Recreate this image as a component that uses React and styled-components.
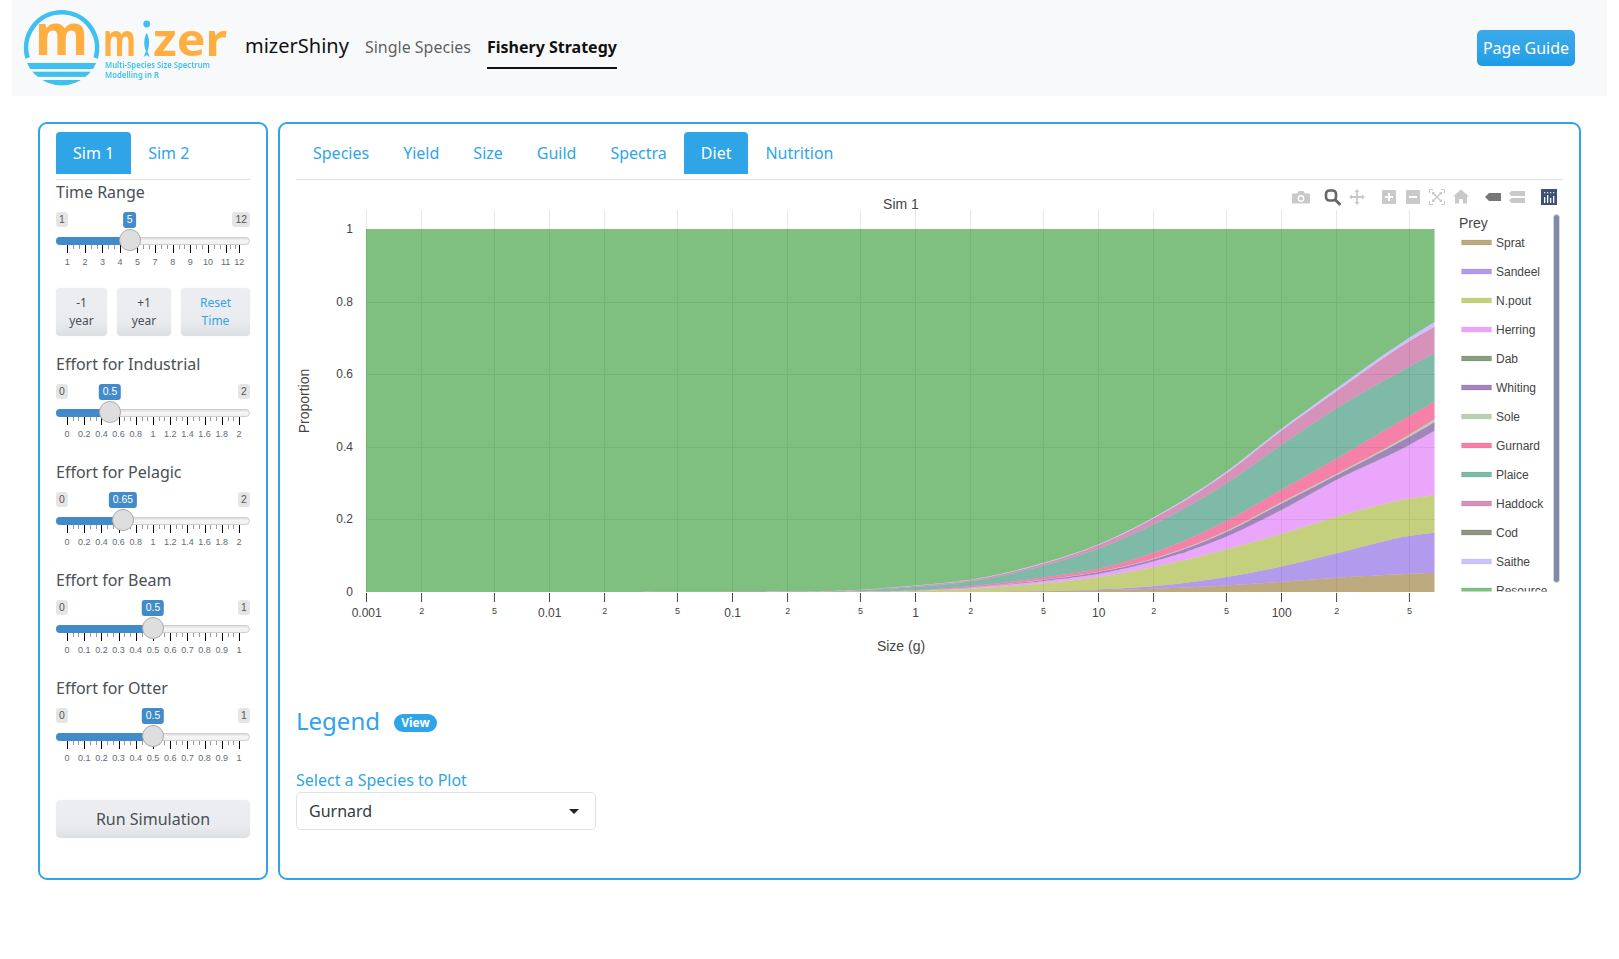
import React from "react";
import styled, { createGlobalStyle } from "styled-components";

const BLUE = "#2fa4e7";
const SANS = `"Noto Sans", "Open Sans", sans-serif`;
const ARIAL = `"Liberation Sans", Arial, sans-serif`;

const Global = createGlobalStyle`
  html, body { margin: 0; padding: 0; background: #fff; }
  body { font-family: ${SANS}; font-size: 16px; color: #495057; }
  * { box-sizing: border-box; }
`;

const Page = styled.div`
  width: 1619px;
  height: 959px;
  overflow: hidden;
`;

const Navbar = styled.nav`
  margin: 0 12px;
  height: 96px;
  background: #f8f9fa;
  display: flex;
  align-items: center;
  padding: 0 32px 0 10px;
`;

const LogoSvg = styled.svg`
  display: block;
  flex: none;
  filter: blur(0.35px);
`;

const Brand = styled.div`
  margin-left: 11px;
  font-size: 20px;
  line-height: 30px;
  color: #111;
  position: relative;
  top: -2px;
`;

const NavLinks = styled.div`
  display: flex;
  gap: 16px;
  margin-left: 16px;
  position: relative;
  top: -2px;
`;

const NavLink = styled.a`
  font-size: 16px;
  line-height: 24px;
  padding: 12px 0 8px;
  color: ${(p) => (p.$active ? "#111" : "rgba(0,0,0,.65)")};
  font-weight: ${(p) => (p.$active ? 700 : 400)};
  border-bottom: 2px solid ${(p) => (p.$active ? "#111" : "transparent")};
`;

const GuideButton = styled.button`
  margin-left: auto;
  width: 98px;
  height: 36px;
  border: none;
  border-radius: 5px;
  background: linear-gradient(#3aa9e9, #2fa4e7 60%, #1d9ce5);
  color: #fff;
  font: 400 16px ${SANS};
  padding: 0;
`;

const Columns = styled.main`
  display: flex;
  gap: 10px;
  margin: 26px 38px 0;
  height: 758px;
`;

const Panel = styled.section`
  border: 2px solid ${BLUE};
  border-radius: 9px;
  padding: 8px 16px 0;
  background: #fff;
  display: flex;
  flex-direction: column;
  flex: ${(p) => (p.$wide ? "1 1 auto" : "0 0 230px")};
  min-width: 0;
`;

const Tabs = styled.div`
  display: flex;
  height: 48px;
  padding-bottom: 5px;
  border-bottom: 1px solid #dee2e6;
  flex: none;
`;

const Tab = styled.div`
  height: 42px;
  padding: 9px 17px;
  font-size: 16px;
  line-height: 24px;
  border-radius: 4px 4px 0 0;
  color: ${(p) => (p.$active ? "#fff" : BLUE)};
  background: ${(p) => (p.$active ? BLUE : "transparent")};
`;

const FieldTitle = styled.div`
  font-size: 16px;
  line-height: 24px;
  color: #495057;
  height: 24px;
`;

const SliderBox = styled.div`
  position: relative;
  height: 66px;
  margin-bottom: ${(p) => (p.$gap ? p.$gap : 0)}px;
  font-family: ${ARIAL};
`;

const EdgeLabel = styled.span`
  position: absolute;
  top: 8px;
  ${(p) => (p.$right ? "right: 0;" : "left: 0;")}
  height: 15px;
  min-width: 12px;
  padding: 0 3px;
  line-height: 15px;
  font-size: 10.4px;
  text-align: center;
  color: #555;
  background: rgba(0, 0, 0, 0.1);
  border-radius: 3px;
`;

const ValueLabel = styled.span`
  position: absolute;
  top: 8px;
  transform: translateX(-50%);
  height: 16px;
  padding: 0 4px;
  line-height: 16px;
  font-size: 10.4px;
  color: #fff;
  background: #428bca;
  border-radius: 3px;
  white-space: nowrap;
`;

const Track = styled.div`
  position: absolute;
  top: 33px;
  left: 0;
  right: 0;
  height: 8px;
  border-radius: 4px;
  border: 1px solid #cfcfcf;
  background: linear-gradient(#dcdcdc, #f5f5f5 40%, #f0f0f0);
`;

const TrackFill = styled.div`
  position: absolute;
  top: 33px;
  left: 0;
  height: 8px;
  border-radius: 4px 0 0 4px;
  background: #428bca;
`;

const Handle = styled.div`
  position: absolute;
  top: 25px;
  width: 22px;
  height: 22px;
  margin-left: -11px;
  border-radius: 50%;
  background: #dedede;
  border: 1px solid #ababab;
`;

const Tick = styled.i`
  position: absolute;
  top: 41px;
  width: 1px;
  height: ${(p) => (p.$major ? 8 : 4)}px;
  background: ${(p) => (p.$major ? "#000" : "#999")};
`;

const TickText = styled.span`
  position: absolute;
  top: 52px;
  transform: translateX(-50%);
  font-size: 9px;
  line-height: 12px;
  color: #5f6b76;
  white-space: nowrap;
`;

const ButtonRow = styled.div`
  display: flex;
  gap: 10px;
  margin: 18px 0 16px;
`;

const SmallButton = styled.button`
  flex: ${(p) => p.$w}px 0 0;
  width: ${(p) => p.$w}px;
  height: 48px;
  padding: 0 4px;
  border: none;
  border-radius: 4px;
  font: 400 12px/18px ${SANS};
  color: ${(p) => (p.$accent ? BLUE : "#495057")};
  background: linear-gradient(#eceef1, #e9ebee 70%, #dde0e3);
  box-shadow: 0 0 1px rgba(0, 0, 0, 0.12);
`;

const RunButton = styled.button`
  width: 194px;
  height: 38px;
  margin-top: 16px;
  border: none;
  border-radius: 5px;
  font: 400 16px ${SANS};
  color: #495057;
  background: linear-gradient(#eceef1, #e9ebee 70%, #dde0e3);
  box-shadow: 0 0 1px rgba(0, 0, 0, 0.12);
`;

const ChartSvg = styled.svg`
  display: block;
  flex: none;
`;

const ChartText = styled.text`
  font-family: ${ARIAL};
  font-size: ${(p) => p.$size || 12}px;
  fill: ${(p) => p.$color || "#444"};
  text-anchor: ${(p) => p.$anchor || "start"};
  dominant-baseline: central;
`;

const LegendHead = styled.div`
  display: flex;
  align-items: center;
  gap: 14px;
  height: 36px;
  color: ${BLUE};
  font-size: 24px;
`;

const LegendTitle = styled.span`
  margin-bottom: 4px;
`;

const Badge = styled.span`
  height: 18px;
  width: 43px;
  margin-top: 2px;
  border-radius: 9px;
  background: ${BLUE};
  color: #fff;
  font-size: 12px;
  font-weight: 700;
  line-height: 18px;
  text-align: center;
`;

const SelectLabel = styled.div`
  margin-top: 28px;
  font-size: 16px;
  line-height: 24px;
  color: ${BLUE};
`;

const Select = styled.div`
  width: 300px;
  height: 38px;
  border: 1px solid #dee2e6;
  border-radius: 5px;
  padding: 0 12px;
  display: flex;
  align-items: center;
  justify-content: space-between;
  font-size: 16px;
  color: #343a40;
`;

const Caret = styled.i`
  width: 0;
  height: 0;
  margin-right: 4px;
  border: 5px solid transparent;
  border-top-color: #222;
  border-bottom: none;
`;

/* ---------- slider ---------- */
const SL = 11;
const SW = 172;

function Slider({ min, max, value, labels, positions, gap }) {
  const f = (value - min) / (max - min);
  const px = SL + f * SW;
  const n = labels.length - 1;
  const majors = positions || labels.map((_, i) => SL + (i * SW) / n);
  const minors = [];
  for (let i = 0; i < n; i++) {
    for (let k = 1; k <= 2; k++) minors.push(majors[i] + ((majors[i + 1] - majors[i]) * k) / 3);
  }
  return (
    <SliderBox $gap={gap}>
      <EdgeLabel>{min}</EdgeLabel>
      <EdgeLabel $right>{max}</EdgeLabel>
      <ValueLabel style={{ left: px }}>{value}</ValueLabel>
      <Track />
      <TrackFill style={{ width: px }} />
      {minors.map((x, i) => (
        <Tick key={"m" + i} style={{ left: x }} />
      ))}
      {majors.map((x, i) => (
        <Tick key={"M" + i} $major style={{ left: x }} />
      ))}
      {labels.map((t, i) => (
        <TickText key={i} style={{ left: majors[i] }}>
          {t}
        </TickText>
      ))}
      <Handle style={{ left: px }} />
    </SliderBox>
  );
}

/* ---------- chart ---------- */
const XS = [0.001, 0.2, 0.5, 1, 2, 5, 10, 20, 50, 100, 200, 500, 690].map(Math.log10);
const px = (lg) => 915 + lg * 183;
const py = (v) => 592 - v * 363;

const SERIES = [
  ["Sprat", "#7b5700", [0, 0, 0, 0, 0.0002, 0.002, 0.005, 0.009, 0.018, 0.028, 0.039, 0.05, 0.053]],
  ["Sandeel", "#6537d9", [0, 0, 0, 0, 0.001, 0.003, 0.007, 0.016, 0.041, 0.07, 0.106, 0.154, 0.163]],
  ["N.pout", "#8ba100", [0, 0.0003, 0.001, 0.003, 0.009, 0.024, 0.041, 0.069, 0.117, 0.16, 0.207, 0.257, 0.267]],
  ["Herring", "#d54df7", [0, 0.0004, 0.0015, 0.004, 0.012, 0.03, 0.05, 0.084, 0.152, 0.225, 0.308, 0.404, 0.444]],
  ["Dab", "#153f00", [0, 0.0004, 0.0015, 0.004, 0.012, 0.03, 0.05, 0.084, 0.152, 0.226, 0.309, 0.405, 0.445]],
  ["Whiting", "#450b7b", [0, 0.0005, 0.0018, 0.0045, 0.0125, 0.033, 0.055, 0.09, 0.165, 0.243, 0.321, 0.427, 0.468]],
  ["Sole", "#71a561", [0, 0.0005, 0.0018, 0.0045, 0.0127, 0.034, 0.056, 0.092, 0.168, 0.247, 0.325, 0.433, 0.476]],
  ["Gurnard", "#eb0351", [0, 0.0006, 0.0022, 0.005, 0.016, 0.04, 0.064, 0.108, 0.195, 0.281, 0.367, 0.484, 0.524]],
  ["Plaice", "#007351", [0, 0.001, 0.005, 0.014, 0.029, 0.072, 0.119, 0.186, 0.298, 0.404, 0.505, 0.62, 0.658]],
  ["Haddock", "#ad2571", [0, 0.0011, 0.006, 0.017, 0.033, 0.078, 0.129, 0.202, 0.326, 0.443, 0.552, 0.69, 0.731]],
  ["Cod", "#172b01", [0, 0.0011, 0.006, 0.017, 0.033, 0.078, 0.129, 0.202, 0.326, 0.443, 0.552, 0.69, 0.731]],
  ["Saithe", "#9b85f7", [0, 0.0012, 0.0065, 0.018, 0.034, 0.08, 0.131, 0.205, 0.331, 0.449, 0.56, 0.7, 0.744]],
];
const RESOURCE = ["Resource", "#007f00", XS.map(() => 1)];

function sampler(xs, ys) {
  const n = xs.length;
  const d = [];
  for (let i = 0; i < n - 1; i++) d.push((ys[i + 1] - ys[i]) / (xs[i + 1] - xs[i]));
  const m = ys.map((_, i) => {
    if (i === 0) return 0;
    if (i === n - 1) return d[n - 2];
    if (d[i - 1] * d[i] <= 0) return 0;
    const h0 = xs[i] - xs[i - 1];
    const h1 = xs[i + 1] - xs[i];
    const avg = (h1 * d[i - 1] + h0 * d[i]) / (h0 + h1);
    return Math.min(avg, 3 * Math.min(d[i - 1], d[i]));
  });
  return (x) => {
    let i = 0;
    while (i < n - 2 && x > xs[i + 1]) i++;
    const h = xs[i + 1] - xs[i];
    const t = (x - xs[i]) / h;
    const t2 = t * t;
    const t3 = t2 * t;
    return (
      (2 * t3 - 3 * t2 + 1) * ys[i] +
      (t3 - 2 * t2 + t) * h * m[i] +
      (-2 * t3 + 3 * t2) * ys[i + 1] +
      (t3 - t2) * h * m[i + 1]
    );
  };
}

function samples(vals) {
  const s = sampler(XS, vals);
  const out = [];
  const a = XS[0];
  const b = XS[XS.length - 1];
  for (let i = 0; i <= 260; i++) {
    const x = a + ((b - a) * i) / 260;
    out.push([px(x), py(s(x))]);
  }
  return out;
}

function bandPath(lower, upper) {
  const top = samples(upper);
  const bot = samples(lower).reverse();
  return "M" + top.concat(bot).map((p) => p[0].toFixed(2) + " " + p[1].toFixed(2)).join("L") + "Z";
}

function Bands() {
  const all = [...SERIES, RESOURCE];
  return all.map((s, i) => {
    const lower = i === 0 ? XS.map(() => 0) : all[i - 1][2];
    return <path key={s[0]} d={bandPath(lower, s[2])} fill={s[1]} fillOpacity={0.5} />;
  });
}

function xTicks() {
  const out = [];
  for (let e = -3; e <= 2; e++) {
    out.push({ lg: e, label: String(10 ** e >= 1 ? 10 ** e : Number((10 ** e).toFixed(3))), big: true });
    out.push({ lg: e + Math.log10(2), label: "2" });
    out.push({ lg: e + Math.log10(5), label: "5" });
  }
  return out;
}

function Grid() {
  const t = xTicks();
  return (
    <g>
      {t.map((k, i) => (
        <line key={i} x1={px(k.lg) + 0.5} x2={px(k.lg) + 0.5} y1={210} y2={592} stroke="#e6e6e6" />
      ))}
      {[0.2, 0.4, 0.6, 0.8].map((v) => (
        <line key={v} x1={366} x2={1435} y1={Math.round(py(v)) + 0.5} y2={Math.round(py(v)) + 0.5} stroke="#e6e6e6" />
      ))}
    </g>
  );
}

function Axes() {
  return (
    <g>
      {xTicks().map((k, i) => (
        <g key={i}>
          <line x1={px(k.lg) + 0.5} x2={px(k.lg) + 0.5} y1={593} y2={602} stroke="#444" />
          <ChartText x={px(k.lg) + 0.7} y={k.big ? 613 : 611} $anchor="middle" $size={k.big ? 12 : 9}>
            {k.label}
          </ChartText>
        </g>
      ))}
      {[0, 0.2, 0.4, 0.6, 0.8, 1].map((v) => (
        <ChartText key={v} x={353} y={py(v)} $anchor="end">
          {v}
        </ChartText>
      ))}
      <ChartText x={901} y={204} $anchor="middle" $size={14}>
        Sim 1
      </ChartText>
      <ChartText x={901} y={645.5} $anchor="middle" $size={14}>
        Size (g)
      </ChartText>
      <ChartText x={304} y={401} $anchor="middle" $size={14} transform="rotate(-90 304 401)">
        Proportion
      </ChartText>
    </g>
  );
}

function ChartLegend() {
  const all = [...SERIES, RESOURCE];
  return (
    <g>
      <clipPath id="legendClip">
        <rect x={1450} y={205} width={112} height={386.5} />
      </clipPath>
      <g clipPath="url(#legendClip)">
        <ChartText x={1459} y={223} $size={14}>
          Prey
        </ChartText>
        {all.map((s, i) => {
          const y = 243 + i * 29;
          return (
            <g key={s[0]}>
              <rect x={1461.5} y={y - 3} width={30} height={5} fill={s[1]} fillOpacity={0.5} stroke={s[1]} strokeOpacity={0.12} />
              <ChartText x={1496} y={y}>
                {s[0]}
              </ChartText>
            </g>
          );
        })}
      </g>
      <rect x={1553.5} y={214.5} width={6} height={368} rx={3} fill="#808ba8" stroke="#d5d9e4" />
    </g>
  );
}

function Modebar() {
  const c = "#c9c9c9";
  return (
    <g>
      {/* camera */}
      <path
        d="M1293 193.5h4l1.5-2.5h5l1.5 2.5h4a1 1 0 0 1 1 1v8a1 1 0 0 1-1 1h-16a1 1 0 0 1-1-1v-8a1 1 0 0 1 1-1z"
        fill={c}
      />
      <circle cx={1301} cy={198.5} r={3.4} fill="#fff" />
      <circle cx={1301} cy={198.5} r={2} fill={c} />
      {/* zoom */}
      <rect x={1326} y={190.5} width={10} height={10} rx={3.5} fill="none" stroke="#666" strokeWidth={2.6} />
      <line x1={1335.5} y1={200} x2={1339.5} y2={204} stroke="#666" strokeWidth={3} strokeLinecap="round" />
      {/* pan */}
      <path
        d="M1357 189l2.5 3h-1.6v4.1h4.1v-1.6l3 2.5-3 2.5v-1.6h-4.1v4.1h1.6l-2.5 3-2.5-3h1.6v-4.1h-4.1v1.6l-3-2.5 3-2.5v1.6h4.1v-4.1h-1.6z"
        fill={c}
      />
      {/* zoom in */}
      <rect x={1382} y={190} width={14} height={14} rx={1} fill={c} />
      <path d="M1388 193h2v3h3v2h-3v3h-2v-3h-3v-2h3z" fill="#fff" />
      {/* zoom out */}
      <rect x={1406} y={190} width={14} height={14} rx={1} fill={c} />
      <rect x={1409} y={196} width={8} height={2} fill="#fff" />
      {/* autoscale */}
      <path
        d="M1429.5 193v-3.5h3.5M1441 189.5h3.5v3.5M1444.5 201v3.5h-3.5M1433 204.5h-3.5V201"
        fill="none"
        stroke={c}
        strokeWidth={1}
      />
      <path d="M1433 193l8 8M1441 193l-8 8" stroke={c} strokeWidth={1.6} />
      <path d="M1432 192h3l-3 3zM1442 192v3l-3-3zM1442 202h-3l3-3zM1432 202v-3l3 3z" fill={c} />
      {/* home */}
      <path d="M1461 189.5l8 7h-2v7h-4.2v-4.5h-3.6v4.5H1455v-7h-2z" fill={c} />
      {/* closest */}
      <path d="M1485 197l4-4h12v8h-12z" fill="#777" />
      {/* compare */}
      <path d="M1509 193.5l2.5-2.5h13.5v5h-13.5zM1509 200.5l2.5-2.5h13.5v5h-13.5z" fill={c} />
      {/* plotly logo */}
      <rect x={1541} y={189} width={16} height={16} fill="#3f4f75" />
      <g fill="#fff">
        {[1544, 1547, 1550, 1553].map((x, i) => (
          <rect key={x} x={x} y={[197, 195, 198, 196][i]} width={1.3} height={[6, 8, 5, 7][i]} />
        ))}
        {[1544, 1547, 1550, 1553].map((x) => (
          <rect key={"d" + x} x={x} y={192} width={1.3} height={1.3} fillOpacity={0.8} />
        ))}
      </g>
    </g>
  );
}

function Chart() {
  return (
    <ChartSvg width={1267} height={524} viewBox="296 180 1267 524">
      <Grid />
      <Bands />
      <Axes />
      <ChartLegend />
      <Modebar />
    </ChartSvg>
  );
}

/* ---------- logo ---------- */
const LogoOrange = styled.text`
  font-family: "Noto Sans", sans-serif;
  font-weight: 700;
  fill: #ffae42;
`;
const LogoBlue = styled.text`
  font-family: "Noto Sans", sans-serif;
  font-weight: 600;
  font-size: 8px;
  fill: #3ec0f0;
`;

function Logo() {
  return (
    <LogoSvg width={212} height={96} viewBox="22 0 212 96">
      <clipPath id="disc">
        <circle cx={61.6} cy={47.5} r={38} />
      </clipPath>
      <path d="M27.6 58A35.5 35.5 0 1 1 95.6 58" fill="none" stroke="#3ec0f0" strokeWidth={4.6} />
      <g clipPath="url(#disc)" fill="#3ec0f0">
        <rect x={22} y={63} width={80} height={6} />
        <rect x={22} y={71.7} width={80} height={5.2} />
        <rect x={22} y={80} width={80} height={6} />
      </g>
      <LogoOrange x={35} y={55} fontSize={58} textLength={53} lengthAdjust="spacingAndGlyphs">
        m
      </LogoOrange>
      <LogoOrange x={103} y={56} fontSize={45} textLength={33} lengthAdjust="spacingAndGlyphs">
        m
      </LogoOrange>
      <circle cx={146.7} cy={24} r={3.4} fill="#3ec0f0" />
      <path d="M146.7 33c2.8 4.5 3.4 12 .7 18.5l2.4 5.5-3.1-2-3.1 2 2.4-5.5c-2.7-6.5-2.1-14 .7-18.5z" fill="#3ec0f0" />
      <LogoOrange x={153} y={56} fontSize={45} textLength={74} lengthAdjust="spacingAndGlyphs">
        zer
      </LogoOrange>
      <LogoBlue x={105} y={68} textLength={105} lengthAdjust="spacingAndGlyphs">
        Multi-Species Size Spectrum
      </LogoBlue>
      <LogoBlue x={105} y={78} textLength={54} lengthAdjust="spacingAndGlyphs">
        Modelling in R
      </LogoBlue>
    </LogoSvg>
  );
}

const T = ["0", "0.2", "0.4", "0.6", "0.8", "1", "1.2", "1.4", "1.6", "1.8", "2"];
const O = ["0", "0.1", "0.2", "0.3", "0.4", "0.5", "0.6", "0.7", "0.8", "0.9", "1"];
const Y = ["1", "2", "3", "4", "5", "7", "8", "9", "10", "11", "12"];
const YPOS = [11.3, 29, 46.4, 64, 81.4, 99, 116.7, 134.3, 152, 169.7, 183.3];

export default function App() {
  return (
    <Page>
      <Global />
      <Navbar>
        <Logo />
        <Brand>mizerShiny</Brand>
        <NavLinks>
          <NavLink>Single Species</NavLink>
          <NavLink $active>Fishery Strategy</NavLink>
        </NavLinks>
        <GuideButton>Page Guide</GuideButton>
      </Navbar>
      <Columns>
        <Panel>
          <Tabs>
            <Tab $active>Sim 1</Tab>
            <Tab>Sim 2</Tab>
          </Tabs>
          <FieldTitle>Time Range</FieldTitle>
          <Slider min={1} max={12} value={5} labels={Y} positions={YPOS} />
          <ButtonRow>
            <SmallButton $w={51}>
              -1
              <br />
              year
            </SmallButton>
            <SmallButton $w={54}>
              +1
              <br />
              year
            </SmallButton>
            <SmallButton $w={69} $accent>
              Reset
              <br />
              Time
            </SmallButton>
          </ButtonRow>
          <FieldTitle>Effort for Industrial</FieldTitle>
          <Slider min={0} max={2} value={0.5} labels={T} gap={18} />
          <FieldTitle>Effort for Pelagic</FieldTitle>
          <Slider min={0} max={2} value={0.65} labels={T} gap={18} />
          <FieldTitle>Effort for Beam</FieldTitle>
          <Slider min={0} max={1} value={0.5} labels={O} gap={18} />
          <FieldTitle>Effort for Otter</FieldTitle>
          <Slider min={0} max={1} value={0.5} labels={O} gap={18} />
          <RunButton>Run Simulation</RunButton>
        </Panel>
        <Panel $wide>
          <Tabs>
            <Tab>Species</Tab>
            <Tab>Yield</Tab>
            <Tab>Size</Tab>
            <Tab>Guild</Tab>
            <Tab>Spectra</Tab>
            <Tab $active>Diet</Tab>
            <Tab>Nutrition</Tab>
          </Tabs>
          <Chart />
          <LegendHead>
            <LegendTitle>Legend</LegendTitle>
            <Badge>View</Badge>
          </LegendHead>
          <SelectLabel>Select a Species to Plot</SelectLabel>
          <Select>
            Gurnard
            <Caret />
          </Select>
        </Panel>
      </Columns>
    </Page>
  );
}
